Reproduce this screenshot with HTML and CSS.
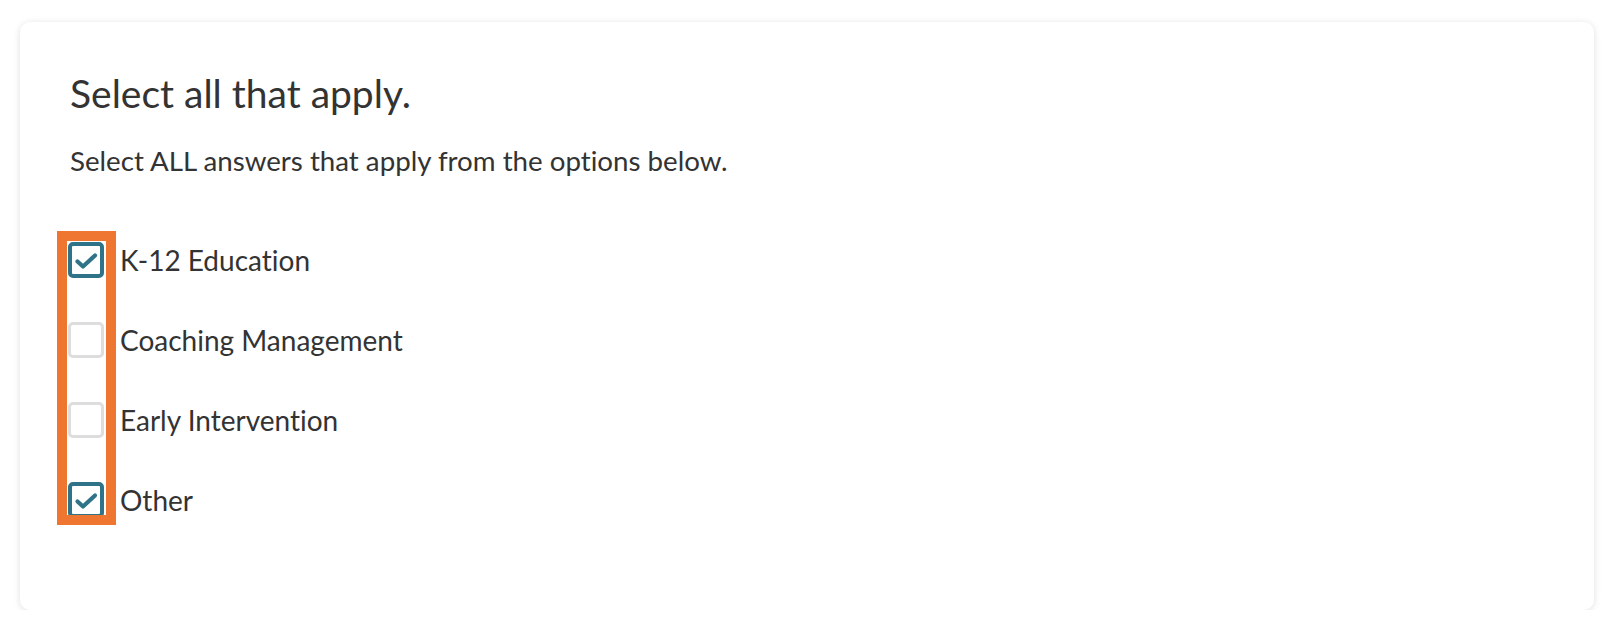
FILE: index.html
```html
<!DOCTYPE html>
<html lang="en">
<head>
<meta charset="utf-8">
<title>Select all that apply</title>
<link rel="stylesheet" href="styles.css">
</head>
<body>
<div class="card">
  <h2 class="title">Select all that apply.</h2>
  <p class="desc">Select ALL answers that apply from the options below.</p>
  <div class="options">
    <div class="highlight"></div>
    <label class="option">
      <span class="box checked"><svg viewBox="0 0 36 36" width="36" height="36"><path d="M9.5 19.5 L15 24.5 L27 13.5" fill="none" stroke="#2f7389" stroke-width="4.2" stroke-linecap="round" stroke-linejoin="round"/></svg></span>
      <span class="text">K-12 Education</span>
    </label>
    <label class="option">
      <span class="box"></span>
      <span class="text">Coaching Management</span>
    </label>
    <label class="option">
      <span class="box"></span>
      <span class="text">Early Intervention</span>
    </label>
    <label class="option">
      <span class="box checked"><svg viewBox="0 0 36 36" width="36" height="36"><path d="M9.5 19.5 L15 24.5 L27 13.5" fill="none" stroke="#2f7389" stroke-width="4.2" stroke-linecap="round" stroke-linejoin="round"/></svg></span>
      <span class="text">Other</span>
    </label>
  </div>
</div>
</body>
</html>
```

FILE: styles.css
```css
html, body {
  margin: 0;
  padding: 0;
  background: #ffffff;
}
body {
  font-family: Lato, "Open Sans", sans-serif;
  color: #333333;
  font-variant-ligatures: none;
}
.card {
  box-sizing: border-box;
  margin: 22px 20px 0;
  height: 588px;
  background: #ffffff;
  border-radius: 10px;
  box-shadow: 0 1px 7px rgba(0, 0, 0, 0.13);
  padding: 48px 50px 0;
}
.title {
  margin: 0;
  font-size: 39px;
  font-weight: 400;
  line-height: 47px;
}
.desc {
  margin: 27px 0 0;
  font-size: 27.7px;
  line-height: 34px;
}
.options {
  position: relative;
  margin: 42px 0 0 -2px;
  display: flex;
  flex-direction: column;
}
.highlight {
  position: absolute;
  left: -11px;
  top: 11px;
  width: 39px;
  height: 274px;
  border: 10px solid #ef7631;
  pointer-events: none;
  z-index: 2;
}
.option {
  display: flex;
  align-items: center;
  height: 80px;
  gap: 16px;
}
.box {
  box-sizing: border-box;
  width: 36px;
  height: 36px;
  border: 3px solid #dddddd;
  border-radius: 5px;
  flex: none;
  position: relative;
  background: #fff;
}
.box.checked {
  border: 4px solid #2f7389;
}
.box svg {
  position: absolute;
  left: -4px;
  top: -4px;
}
.text {
  font-size: 28px;
  line-height: 34px;
}
```
